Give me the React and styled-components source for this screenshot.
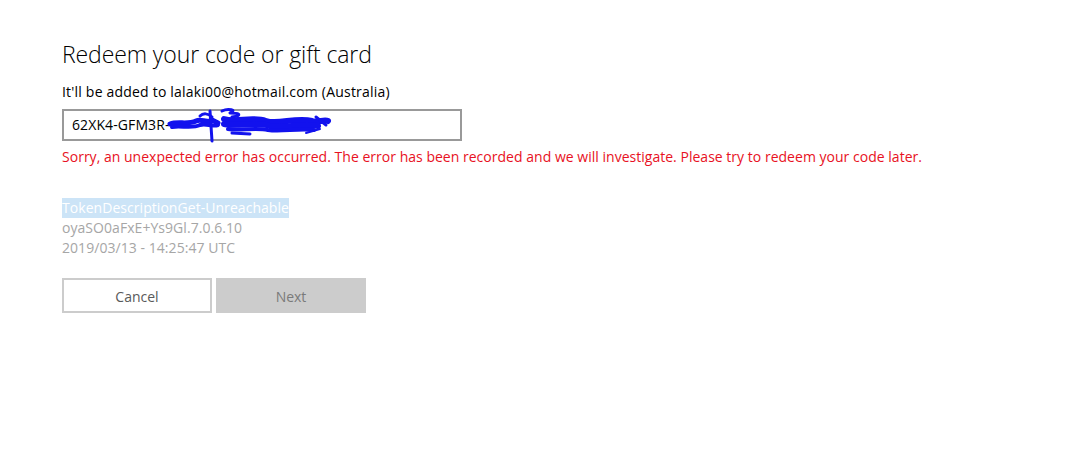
import React from 'react';
import styled, { createGlobalStyle } from 'styled-components';

const GlobalStyle = createGlobalStyle`
  html, body {
    margin: 0;
    background: #ffffff;
  }
  body {
    font-family: "Open Sans", "Noto Sans", sans-serif;
    color: #000;
  }
`;

const Page = styled.div`
  width: 1076px;
  height: 474px;
  padding: 38px 0 0 62px;
  box-sizing: border-box;
`;

const Title = styled.h1`
  margin: 0;
  font-size: 23px;
  font-weight: 300;
  line-height: 32px;
  letter-spacing: -0.1px;
`;

const Subtitle = styled.p`
  margin: 12px 0 0;
  font-size: 14px;
  line-height: 20px;
  letter-spacing: 0.2px;
`;

const InputWrap = styled.div`
  position: relative;
  margin-top: 7px;
  width: 400px;
`;

const CodeInput = styled.div`
  box-sizing: border-box;
  height: 32px;
  border: 2px solid #999999;
  padding: 0 8px;
  font-size: 14px;
  line-height: 28px;
  letter-spacing: 0.1px;
`;

const Scribble = styled.svg`
  position: absolute;
  left: 104px;
  top: -6px;
  pointer-events: none;
`;

const ErrorText = styled.p`
  margin: 6px 0 0;
  color: #e81123;
  font-size: 14px;
  line-height: 20px;
  letter-spacing: 0.02px;
`;

const Details = styled.div`
  margin-top: 31px;
  display: flex;
  flex-direction: column;
  align-items: flex-start;
  color: #a6a6a6;
  font-size: 14px;
  line-height: 20px;
  letter-spacing: 0.05px;
`;

const Selected = styled.span`
  background: #cce4f7;
  color: #ffffff;
`;

const Actions = styled.div`
  margin-top: 20px;
  display: flex;
  gap: 4px;
`;

const Button = styled.button`
  box-sizing: border-box;
  width: 150px;
  height: 35px;
  font-family: inherit;
  font-size: 14px;
  border: 2px solid #cccccc;
  background: ${p => (p.$disabled ? '#cccccc' : '#ffffff')};
  color: ${p => (p.$disabled ? '#7a7a7a' : '#5a5a5a')};
  padding: 1px 0 0;
`;

function Redaction() {
  return (
    <Scribble width="172" height="46" viewBox="0 0 172 46">
      <g fill="none" stroke="#1212ee" strokeLinecap="round" strokeLinejoin="round">
        <path d="M4 21 C12 18 22 22 30 18 C36 15 40 21 46 17 L52 20" strokeWidth="5" />
        <path d="M6 24 C14 22 26 26 34 22 C40 20 46 24 52 22" strokeWidth="4" />
        <path d="M34 13 C37 10 42 10 46 14" strokeWidth="3" />
        <path d="M44 8 L46 38" strokeWidth="3" />
        <path d="M56 8 C62 5 72 7 64 10 C72 10 78 12 66 14" strokeWidth="3" />
        <path d="M58 16 C70 20 86 13 100 18 C112 22 130 14 146 18 C152 20 158 16 162 18" strokeWidth="6" />
        <path d="M58 21 C72 24 90 18 104 23 C118 27 134 19 152 23" strokeWidth="6" />
        <path d="M62 26 C74 28 90 24 102 27 C116 29 132 25 148 27" strokeWidth="4" />
        <path d="M66 30 L84 31" strokeWidth="3" />
        <path d="M150 14 L160 22" strokeWidth="3" />
        <path d="M140 30 L154 26" strokeWidth="2" />
      </g>
    </Scribble>
  );
}

export default function App() {
  return (
    <>
      <GlobalStyle />
      <Page>
        <Title>Redeem your code or gift card</Title>
        <Subtitle>It'll be added to lalaki00@hotmail.com (Australia)</Subtitle>
        <InputWrap>
          <CodeInput>62XK4-GFM3R-</CodeInput>
          <Redaction />
        </InputWrap>
        <ErrorText>
          Sorry, an unexpected error has occurred. The error has been recorded and we will investigate. Please try to redeem your code later.
        </ErrorText>
        <Details>
          <Selected>TokenDescriptionGet-Unreachable</Selected>
          <span>oyaSO0aFxE+Ys9Gl.7.0.6.10</span>
          <span>2019/03/13 - 14:25:47 UTC</span>
        </Details>
        <Actions>
          <Button>Cancel</Button>
          <Button $disabled>Next</Button>
        </Actions>
      </Page>
    </>
  );
}
